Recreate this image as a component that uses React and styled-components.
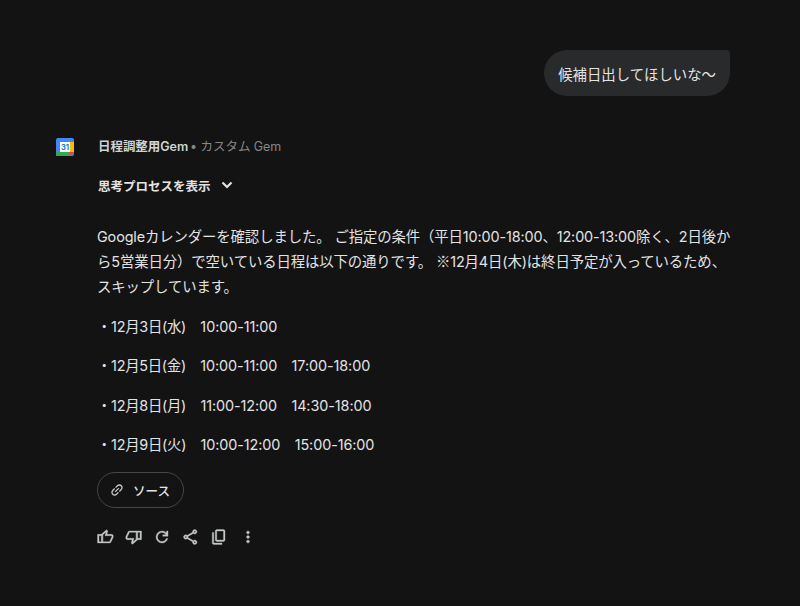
import React from 'react';
import styled, { createGlobalStyle } from 'styled-components';

const Global = createGlobalStyle`
  html, body { margin: 0; padding: 0; background: #131314; }
  body { font-family: Inter, "Noto Sans CJK JP", sans-serif; color: #e3e3e3; }
`;
const Page = styled.div`
  width: 800px; height: 606px; overflow: hidden; box-sizing: border-box;
  background: #131314; padding: 50px 0 0 56px;
  display: flex; flex-direction: column;
`;
const UserRow = styled.div`display: flex; justify-content: flex-end; padding-right: 70px;`;
const Bubble = styled.div`
  height: 46px; box-sizing: border-box; padding: 0 14px 0 14px;
  display: flex; align-items: center;
  background: #282a2c; border-radius: 24px 4px 24px 24px;
  font-size: 14.4px; color: #e3e3e3;
`;
const Reply = styled.div`display: flex; margin-top: 41px;`;
const Avatar = styled.svg`width: 18px; height: 18px; flex: none; margin: 1px 23px 0 0;`;
const Body = styled.div`display: flex; flex-direction: column; width: 636px;`;
const Header = styled.div`
  height: 17px; display: flex; align-items: center; font-size: 12.5px; font-weight: 600; color: #d0d3d1; padding-left: 1px; letter-spacing: -0.05px;
`;
const Muted = styled.span`font-weight: 400; color: #858789; margin-left: 2px;`;
const Thoughts = styled.div`
  margin-top: 22px; height: 18px; padding-left: 1px; display: flex; align-items: center; gap: 8px;
  font-size: 12.5px; font-weight: 600; color: #e3e3e3;
`;
const Para = styled.p`
  margin: 0; font-size: 14.4px; line-height: 25px; color: #e3e3e3; letter-spacing: -0.12px;
`;
const Intro = styled(Para)`margin-top: 30px; margin-bottom: 0.5px;`;
const Cjk = styled.span`font-family: "Noto Sans CJK JP", sans-serif; line-height: 0;`;
const Slot = styled(Para)`margin-top: 14.4px; white-space: pre; letter-spacing: -0.08px;`;
const SlotDate = styled.span`letter-spacing: -0.28px;`;
const Source = styled.div`
  margin-top: 15px; width: 87px; height: 36px; box-sizing: border-box;
  border: 1px solid #444746; border-radius: 18px;
  display: flex; align-items: center; padding-left: 11px; gap: 8px;
  font-size: 12.5px; font-weight: 500; color: #e3e3e3;
`;
const Actions = styled.div`
  margin: 20px 0 0 -1px; height: 18px; display: flex; align-items: center; gap: 10.6px; color: #c4c7c5;
`;
const Act = styled.svg.attrs({ viewBox: '0 -960 960 960', preserveAspectRatio: 'none' })`
  width: 18px; height: ${p => (p.$flat ? 16 : 18)}px; flex: none;
  fill: currentColor; stroke: currentColor; stroke-width: 18;
`;

const slots = [
  ['・12月3日(水)', '　10:00-11:00'],
  ['・12月5日(金)', '　10:00-11:00　17:00-18:00'],
  ['・12月8日(月)', '　11:00-12:00　14:30-18:00'],
  ['・12月9日(火)', '　10:00-12:00　15:00-16:00'],
];

export default function App() {
  return (
    <Page>
      <Global />
      <UserRow><Bubble>候補日出してほしいな〜</Bubble></UserRow>
      <Reply>
        <Avatar viewBox="0 0 18 18">
          <rect x="0" y="0" width="18" height="18" rx="2" fill="#4285f4" />
          <rect x="14" y="4" width="4" height="10" fill="#fbbc04" />
          <rect x="0" y="14" width="14" height="4" fill="#34a853" />
          <path d="M14 14h4l-4 4z" fill="#ea4335" />
          <rect x="4" y="4" width="10" height="10" fill="#fff" />
          <text x="9" y="12" textAnchor="middle" fontSize="7.5" fontWeight="700" fill="#1a73e8" fontFamily="Inter, sans-serif">31</text>
        </Avatar>
        <Body>
          <Header>日程調整用Gem<Muted>• カスタム Gem</Muted></Header>
          <Thoughts>
            思考プロセスを表示
            <svg width="16" height="16" viewBox="0 0 16 16" fill="none" stroke="#e3e3e3" strokeWidth="2.2"><path d="M3.500 5.500 8 10l4.500-4.500" /></svg>
          </Thoughts>
          <Intro>Googleカレンダーを確認しました。 ご指定の条件（平日10:00-18:00、12:00-13:00除く、2日後から5営業日分）で空いている日程は以下の通りです。 <Cjk>※</Cjk>12月4日(木)は終日予定が入っているため、スキップしています。</Intro>
          {slots.map(([d, t]) => <Slot key={d}><SlotDate>{d}</SlotDate>{t}</Slot>)}
          <Source>
            <svg width="16" height="16" viewBox="0 0 24 24" fill="#c4c7c5"><path transform="rotate(-45 12 12)" d="M17 7h-4v2h4c1.650 0 3 1.350 3 3s-1.350 3-3 3h-4v2h4c2.760 0 5-2.240 5-5s-2.240-5-5-5zm-6 8H7c-1.650 0-3-1.350-3-3s1.350-3 3-3h4V7H7c-2.760 0-5 2.240-5 5s2.240 5 5 5h4v-2zm-3-4h8v2H8z" /></svg>
            ソース
          </Source>
          <Actions>
            <Act $flat><path d="M720-120H280v-520l280-280 50 50q7 7 11.500 19t4.500 23v14l-44 174h258q32 0 56 24t24 56v80q0 7-2 15t-4 15L794-168q-9 20-30 34t-44 14Zm-360-80h360l120-280v-80H480l54-220-174 174v406Zm0-406v406-406Zm-80-34v80H160v360h120v80H80v-520h200Z" /></Act>
            <Act $flat><path d="M240-840h440v520L400-40l-50-50q-7-7-11.500-19t-4.500-23v-14l44-174H120q-32 0-56-24t-24-56v-80q0-7 2-15t4-15l120-282q9-20 30-34t44-14Zm360 80H240L120-480v80h360l-54 220 174-174v-406Zm0 406v-406 406Zm80 34v-80h120v-360H680v-80h200v520H680Z" /></Act>
            <Act><path d="M480-160q-134 0-227-93t-93-227q0-134 93-227t227-93q69 0 132 28.500T720-690v-110h80v280H520v-80h168q-32-56-87.500-88T480-720q-100 0-170 70t-70 170q0 100 70 170t170 70q77 0 139-44t87-116h84q-28 106-114 173t-196 67Z" /></Act>
            <Act><path d="M680-80q-50 0-85-35t-35-85q0-6 3-28L282-392q-16 15-37 23.500t-45 8.500q-50 0-85-35t-35-85q0-50 35-85t85-35q24 0 45 8.500t37 23.500l281-164q-2-7-2.500-13.500T560-760q0-50 35-85t85-35q50 0 85 35t35 85q0 50-35 85t-85 35q-24 0-45-8.500T598-672L317-508q2 7 2.500 13.500t.5 14.500q0 8-.5 14.500T317-452l281 164q16-15 37-23.500t45-8.500q50 0 85 35t35 85q0 50-35 85t-85 35Zm0-80q17 0 28.500-11.500T720-200q0-17-11.500-28.500T680-240q-17 0-28.500 11.500T640-200q0 17 11.500 28.500T680-160ZM200-440q17 0 28.500-11.500T240-480q0-17-11.500-28.500T200-520q-17 0-28.500 11.500T160-480q0 17 11.500 28.500T200-440Zm480-280q17 0 28.500-11.500T720-760q0-17-11.500-28.500T680-800q-17 0-28.500 11.500T640-760q0 17 11.500 28.500T680-720Z" /></Act>
            <Act><path d="M360-240q-33 0-56.500-23.500T280-320v-480q0-33 23.500-56.500T360-880h360q33 0 56.500 23.500T800-800v480q0 33-23.500 56.500T720-240H360Zm0-80h360v-480H360v480ZM200-80q-33 0-56.500-23.500T120-160v-560h80v560h440v80H200Z" /></Act>
            <Act><path d="M480-160q-33 0-56.500-23.500T400-240q0-33 23.500-56.500T480-320q33 0 56.500 23.500T560-240q0 33-23.500 56.500T480-160Zm0-240q-33 0-56.500-23.500T400-480q0-33 23.500-56.500T480-560q33 0 56.500 23.500T560-480q0 33-23.500 56.500T480-400Zm0-240q-33 0-56.500-23.500T400-720q0-33 23.500-56.500T480-800q33 0 56.500 23.500T560-720q0 33-23.500 56.500T480-640Z" /></Act>
          </Actions>
        </Body>
      </Reply>
    </Page>
  );
}
